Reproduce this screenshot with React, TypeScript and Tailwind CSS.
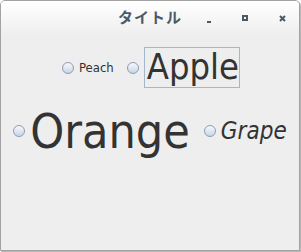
import React from 'react';

const Radio: React.FC = () => (
  <span className="w-[12px] h-[12px] rounded-full border border-[#8b9db3] bg-gradient-to-b from-[#f6f9fc] to-[#c9d6e4] shrink-0" />
);

export default function App() {
  return (
    <div className="w-[301px] h-[252px] bg-white">
      <div className="w-[300px] h-[251px] flex flex-col rounded-t-[5px] border border-[#a2a2a2] shadow-[1px_1px_1px_#b0b0b0] overflow-hidden bg-[#eeeeee]">
        <div className="relative h-[34px] shrink-0 bg-gradient-to-b from-[#ffffff] to-[#eeeeee] flex items-center justify-center">
          <span className="text-[15px] font-bold text-[#4b5a67] [font-family:'Noto_Sans_CJK_JP',sans-serif] tracking-[1px] -mt-[2px]">
            タイトル
          </span>
          <span className="absolute left-[206px] top-[20px] w-[4px] h-[2px] bg-[#4b5a67]" />
          <span className="absolute left-[241px] top-[14px] w-[6px] h-[6px] border-2 border-[#4b5a67]" />
          <svg className="absolute left-[278px] top-[14px]" width="7" height="7" viewBox="0 0 7 7">
            <path d="M1 1 L6 6 M6 1 L1 6" stroke="#4b5a67" strokeWidth="2" />
          </svg>
        </div>
        <div className="flex flex-col items-center [font-family:'DejaVu_Sans_Condensed','DejaVu_Sans',sans-serif] [font-stretch:condensed] text-[#333333]">
          <div className="flex items-center gap-[13px] mt-[12px] ml-[2px]">
            <label className="flex items-center gap-[5px]">
              <Radio />
              <span className="text-[13px] leading-none">Peach</span>
            </label>
            <label className="flex items-center gap-[5px]">
              <Radio />
              <span className="text-[36px] leading-none border border-[#a3b8cc] pl-[2px] pt-[1px] pb-[2px]">Apple</span>
            </label>
          </div>
          <div className="flex items-center gap-[14px] mt-[19px]">
            <label className="flex items-center gap-[5px]">
              <Radio />
              <span className="text-[48px] leading-none">Orange</span>
            </label>
            <label className="flex items-center gap-[5px]">
              <Radio />
              <span className="text-[24px] italic leading-none">Grape</span>
            </label>
          </div>
        </div>
      </div>
    </div>
  );
}
